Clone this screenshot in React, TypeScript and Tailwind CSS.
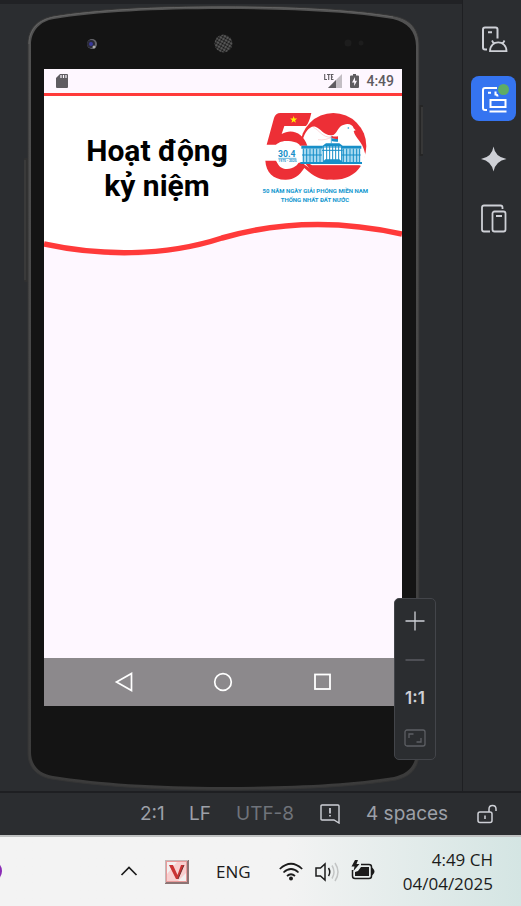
import type { ReactNode } from "react";

const logoFont = { fontFamily: "Roboto, 'Liberation Sans', sans-serif" };

function PhoneFrame() {
  return (
    <svg className="absolute inset-0 h-full w-full" viewBox="24 4 400 787" preserveAspectRatio="none" aria-hidden="true">
      <defs>
        <linearGradient id="edge" x1="0" y1="0" x2="0" y2="1">
          <stop offset="0" stopColor="#525252" />
          <stop offset="1" stopColor="#3b3b3b" />
        </linearGradient>
        <pattern id="mesh" width="3" height="3" patternUnits="userSpaceOnUse" patternTransform="rotate(30)">
          <rect width="3" height="3" fill="#6a6a6a" />
          <circle cx="1.5" cy="1.5" r="1.2" fill="#151515" />
        </pattern>
      </defs>
      <rect x="24" y="158" width="4" height="124" rx="1" fill="#303030" />
      <path d="M25 160V280" stroke="#454545" strokeWidth="1" />
      <rect x="419" y="105" width="4" height="51" rx="1" fill="#252525" />
      <path d="M422 107V154" stroke="#4b4b4b" strokeWidth="1" />
      <path
        d="M28 44C28 28 38 19 53 16C95 9 155 6 223 6C292 6 352 9 394 16C410 19 419 29 419 45V753C419 769 409 777 396 780C352 787 292 790 223 790C155 790 96 786 52 779C38 777 28 768 28 753Z"
        fill="url(#edge)"
        stroke="#353535"
        strokeWidth="1"
      />
      <path
        d="M31 45C31 31 40 21 54 19C96 12 156 9 223 9C291 9 351 12 393 19C407 22 416 31 416 46V752C416 766 407 774 394 777C351 784 291 787 223 787C156 787 97 783 53 776C40 774 31 766 31 752Z"
        fill="#141414"
      />
      <path
        d="M29 44C29 29 39 20 54 17C96 10 156 7 223 7C291 7 351 10 393 17"
        fill="none"
        stroke="#636363"
        strokeWidth="1"
      />
      <circle cx="92" cy="44" r="5" fill="#66666c" />
      <circle cx="91" cy="44" r="4" fill="#292936" />
      <circle cx="91" cy="44" r="2" fill="#39399a" />
      <circle cx="94" cy="47" r="1.5" fill="#aaa" />
      <circle cx="223.500" cy="43.500" r="9" fill="url(#mesh)" />
      <circle cx="348" cy="43" r="3.500" fill="#1d1d1d" />
      <circle cx="361" cy="43" r="2.500" fill="#1d1d1d" />
    </svg>
  );
}

function AnniversaryLogo() {
  return (
    <svg className="h-[110px] w-[130px] shrink-0" viewBox="0 0 390 330" role="img" aria-label="50 năm">
      <circle cx="250" cy="138" r="99" fill="#ed2f36" />
      <path
        d="M158 120C164 98 178 76 196 80C214 87 219 104 243 106C262 108 262 76 282 74C296 69 309 75 311 85L317 91L311 93C316 116 338 124 345 160C346 180 340 188 332 196H186L150 175V136Z"
        fill="#fff"
      />
      <path d="M190 82C210 92 216 112 244 112C232 118 220 121 204 119" fill="none" stroke="#f7c4c6" strokeWidth="2" />
      <circle cx="295" cy="84" r="2.500" fill="#1799d2" />
      <path
        d="M91 39H184Q177 70 168 78H103L95 102C124 84 160 98 172 137H150C146 128 129 123 109 123C92 123 84 130 78 134H50L72 54Q77 39 91 39Z"
        fill="#ed2f36"
      />
      <path
        d="M46 182H80C84 198 95 207 111 207C130 207 143 196 149 183C170 198 205 226 247 237C210 246 184 222 163 204C147 228 132 239 108 239C70 240 48 216 46 182Z"
        fill="#ed2f36"
      />
      <path d="m131 48 2.600 7.500h8l-6.300 5 2.400 7.800-6.700-4.700-6.700 4.700 2.400-7.800-6.300-5h8z" fill="#fff200" />
      <circle cx="112" cy="165" r="38" fill="#fff" />
      <path d="M140 138H170V188H140Z" fill="#fff" />
      <text x="84" y="170" fontSize="26" fontWeight="700" fill="#178fc8" style={logoFont}>30.4</text>
      <path d="M85 175H139" stroke="#178fc8" strokeWidth="2" />
      <text x="85" y="187" fontSize="10" fontWeight="700" fill="#178fc8" style={logoFont}>1975 - 2025</text>
      <path d="M154 137H218L228 130H268L278 137H334V146H154Z" fill="#178fc8" />
      <path d="M158 146H330V186H158Z" fill="#a8daf0" />
      <path
        d="M160 146V187M170 146V187M180 146V187M190 146V187M200 146V187M210 146V187M280 146V187M290 146V187M300 146V187M310 146V187M320 146V187M329 146V187M156 165H216M274 165H332"
        stroke="#178fc8"
        strokeWidth="3"
      />
      <path d="M218 139H274V187H218Z" fill="#fff" />
      <path d="M220 138V187M230 138V187M239 138V187M248 138V187M257 138V187M266 138V187M275 138V187M216 141H278M216 151H278" stroke="#178fc8" strokeWidth="3" />
      <path d="M151 186H218L226 178H268L278 186H336V192H151Z" fill="#178fc8" />
      <path d="M244 130V108" stroke="#178fc8" strokeWidth="2" />
      <path d="M245 107Q252 111 264 109V117Q253 118 245 115Z" fill="#ed2f36" />
      <path d="M245 115Q253 118 264 117V125Q253 126 245 123Z" fill="#178fc8" />
      <path d="M183 197H333C315 225 286 239 250 239C222 237 199 223 183 197Z" fill="#ed2f36" />
      <text x="196" y="279" textAnchor="middle" fontSize="18" fontWeight="700" fill="#1297cf" style={logoFont}>50 NĂM NGÀY GIẢI PHÓNG MIỀN NAM</text>
      <text x="195" y="306" textAnchor="middle" fontSize="18" fontWeight="700" fill="#1297cf" style={logoFont}>THỐNG NHẤT ĐẤT NƯỚC</text>
    </svg>
  );
}

function AndroidStatus() {
  return (
    <div className="flex h-6 items-center justify-between bg-[#fef7ff] pr-2 pl-3 text-[#5f5c61]">
      <svg className="h-[14px] w-3" viewBox="0 0 12 14" aria-label="SD card">
        <path d="M4 0H11Q12 0 12 1V13Q12 14 11 14H1Q0 14 0 13V4Z" fill="currentColor" />
        <path d="M5 1V4M7.500 1V4M10 1V4" stroke="#fef7ff" strokeWidth="1.200" />
      </svg>
      <div className="flex items-center">
        <svg className="h-4 w-[19px]" viewBox="0 0 19 16" aria-label="LTE signal">
          <path d="M4 15 18 1V15Z" fill="#c3bec4" />
          <path d="M4 15 12 7V15Z" fill="currentColor" />
          <path d="M.7 1V6.500H3M3 1.500H6.500M4.700 1V7M9.500 1.500H7.500V6.500H9.500M7.500 4H9" fill="none" stroke="currentColor" strokeWidth="1.100" />
        </svg>
        <svg className="ml-[7px] h-[14px] w-[9px]" viewBox="0 0 9 14" aria-label="Battery charging">
          <path d="M3 0H6V1.500H8Q9 1.500 9 2.500V13Q9 14 8 14H1Q0 14 0 13V2.500Q0 1.500 1 1.500H3Z" fill="currentColor" />
          <path d="M5 3 2 8.500H4.200V12L7 6.800H5Z" fill="#fef7ff" />
        </svg>
        <span className="ml-[7px] text-[14px] leading-6 font-medium">4:49</span>
      </div>
    </div>
  );
}

function Phone() {
  return (
    <div className="relative ml-6 w-[400px] shrink-0 pt-[65px] pr-[22px] pb-[85px] pl-5">
      <PhoneFrame />
      <div className="relative flex h-full flex-col bg-[#fef7ff] font-['Roboto','Liberation_Sans',sans-serif]">
        <AndroidStatus />
        <header className="border-t-3 border-[#ff3a3a]">
          <div className="flex h-[122px] bg-white pr-[22px] pl-5">
            <h1 className="min-w-0 flex-1 pt-[37px] text-center text-[30px] leading-[35px] font-bold text-black">
              Hoạt động
              <br />
              kỷ niệm
            </h1>
            <div className="w-[130px] pt-1">
              <AnniversaryLogo />
            </div>
          </div>
          <svg className="block h-10 w-full" viewBox="0 0 358 40" preserveAspectRatio="none" aria-hidden="true">
            <path d="M0 0H358V16C300 3 240 2 178 20C120 39 55 38 0 26Z" fill="#fff" />
            <path d="M0 26C55 38 120 39 178 20C240 2 300 3 358 16" fill="none" stroke="#ff3a3a" strokeWidth="5.500" />
          </svg>
        </header>
        <main className="flex-1" />
        <nav className="flex h-12 items-center justify-center gap-[75px] bg-[#8c898c] text-white">
          <button className="h-6 w-6" aria-label="Back">
            <svg viewBox="0 0 24 24"><path d="M19.500 3.500V20.500L4.500 12Z" fill="none" stroke="currentColor" strokeWidth="1.700" /></svg>
          </button>
          <button className="h-6 w-6" aria-label="Home">
            <svg viewBox="0 0 24 24"><circle cx="12" cy="12" r="8.300" fill="none" stroke="currentColor" strokeWidth="1.700" /></svg>
          </button>
          <button className="h-6 w-6" aria-label="Overview">
            <svg viewBox="0 0 24 24"><rect x="5" y="4.500" width="15" height="14.500" fill="none" stroke="currentColor" strokeWidth="1.800" /></svg>
          </button>
        </nav>
      </div>
    </div>
  );
}

function ZoomControls() {
  return (
    <div className="absolute top-[598px] left-[394px] flex h-[162px] w-[42px] flex-col items-center rounded-[5px] border border-[#43454a] bg-[#2b2d30] text-[#ced0d6]">
      <button className="flex h-[43px] w-full items-center justify-center" aria-label="Zoom in">
        <svg className="h-5 w-5" viewBox="0 0 20 20"><path d="M10 .5V19.500M.5 10H19.500" stroke="currentColor" strokeWidth="1.300" /></svg>
      </button>
      <button className="flex h-[35px] w-full items-center justify-center" aria-label="Zoom out">
        <svg className="h-5 w-5" viewBox="0 0 20 20"><path d="M.5 10H19.500" stroke="#626469" strokeWidth="1.300" /></svg>
      </button>
      <button className="h-[43px] w-full font-['Inter',sans-serif] text-[17px] font-semibold">1:1</button>
      <button className="flex h-[35px] w-full items-center justify-center" aria-label="Fit to screen">
        <svg className="h-[18px] w-[22px]" viewBox="0 0 22 18" fill="none" stroke="#5d5f64" strokeWidth="1.300">
          <rect x="1" y="1" width="20" height="16" rx="2" />
          <path d="M5 9V5H9.500M12.500 13H17V9" />
        </svg>
      </button>
    </div>
  );
}

function ToolButton({ label, active, children }: { label: string; active?: boolean; children: ReactNode }) {
  return (
    <button
      aria-label={label}
      className={
        active
          ? "flex h-[45px] w-[45px] items-center justify-center rounded-lg bg-[#3574f0] text-white"
          : "flex h-[45px] w-[45px] items-center justify-center rounded-lg text-[#ced0d6]"
      }
    >
      <svg className="h-[30px] w-[30px]" viewBox="0 0 30 30" fill="none" stroke="currentColor" strokeWidth="2">
        {children}
      </svg>
    </button>
  );
}

function ToolStrip() {
  return (
    <aside className="flex w-[59px] shrink-0 flex-col items-center gap-[15px] border-l border-[#1e1f22] pt-4 pl-[3px]">
      <ToolButton label="Device manager">
        <path d="M8 25.500H6Q4 25.500 4 23.500V5.500Q4 3.500 6 3.500H16.500Q18.500 3.500 18.500 5.500V14.500M9 8.300H13" />
        <path d="M11 27.200C11 15.500 27.500 15.500 27.500 27.200ZM15 20 13 16.500M23.500 20 25.500 16.500" strokeWidth="1.800" />
      </ToolButton>
      <ToolButton label="Running devices" active>
        <path d="M8 26H6Q4 26 4 24V6Q4 4 6 4H18M9 8.800H12M16.500 7.500V10.500Q18.500 10.500 18.500 12.500" />
        <rect x="11.500" y="16" width="15" height="7" />
        <path d="M10.500 27.500H27.500" />
        <circle cx="24.500" cy="5.500" r="5.500" fill="#5fad65" stroke="none" />
      </ToolButton>
      <ToolButton label="Gemini">
        <path d="M14.500 2.500Q16 13 27.500 15Q16.500 17 14.500 27.500Q12.500 17 2 15Q13 13 14.500 2.500Z" fill="currentColor" stroke="none" />
      </ToolButton>
      <ToolButton label="Device explorer">
        <path d="M11 27.500H5Q3 27.500 3 25.500V3.500Q3 1.500 5 1.500H21.500Q23.500 1.500 23.500 3.500V5" strokeWidth="1.800" />
        <rect x="13.500" y="7.500" width="13" height="20" rx="2" strokeWidth="1.800" />
        <path d="M17 12H23" />
      </ToolButton>
    </aside>
  );
}

function StatusBar() {
  return (
    <footer className="flex h-11 items-center border-t-2 border-[#1e1f22] bg-[#2b2d30] pr-6 pl-[140px] font-['Inter',sans-serif] text-[19px] text-[#9da0a8]">
      <button className="w-[49px] text-left">2:1</button>
      <button className="w-[47px] text-left">LF</button>
      <button className="w-[84px] text-left text-[#6f737a]">UTF-8</button>
      <button className="flex w-[46px] items-center" aria-label="Notifications">
        <svg className="h-5 w-5" viewBox="0 0 20 20" fill="none" stroke="#ced0d6" strokeWidth="1.400">
          <path d="M2 1H18Q19 1 19 2V19L14 16H2Q1 16 1 15V2Q1 1 2 1Z" />
          <path d="M10 4V9.500M10 11V12.500" strokeWidth="1.700" />
        </svg>
      </button>
      <button className="text-left whitespace-nowrap">4 spaces</button>
      <button className="ml-auto" aria-label="File is writable">
        <svg className="h-5 w-5" viewBox="0 0 20 20" fill="none" stroke="#ced0d6" strokeWidth="1.500">
          <rect x="1" y="8" width="14" height="10.500" rx="2" />
          <path d="M12 8V5Q12 1.500 15.500 1.500Q19 1.500 19 5V7M8 11.500V15" />
        </svg>
      </button>
    </footer>
  );
}

function Taskbar() {
  return (
    <div className="relative flex h-[71px] items-center overflow-hidden border-t-2 border-[#bfc1c1] bg-linear-to-r from-[#f3f3f3] from-55% to-[#d4e5e3] pr-7 pl-[120px] font-['Open_Sans','Noto_Sans',sans-serif] text-[17px] text-[#1b1b1b]">
      <span className="absolute top-[23px] -left-[20px] h-[22px] w-[22px] rounded-full bg-[#8a2bb5]" />
      <button className="w-[45px]" aria-label="Show hidden icons">
        <svg className="h-[18px] w-[18px]" viewBox="0 0 18 18"><path d="M1.500 12 9 4.500 16.500 12" fill="none" stroke="currentColor" strokeWidth="1.700" /></svg>
      </button>
      <button className="w-[51px]" aria-label="Vietnamese input">
        <svg className="h-6 w-6" viewBox="0 0 24 24">
          <rect width="24" height="24" fill="#8c7474" />
          <path d="M0 0H23V1H1V23H0Z" fill="#c3b9b9" />
          <rect x="1" y="1" width="21" height="21" fill="#e99a9a" />
          <rect x="2" y="2" width="19" height="19" fill="#f8cfcf" />
          <path d="M2 2H12L2 14ZM21 13V21H13Z" fill="#f3f0f0" />
          <path d="M4 5H8L12.500 15 16 5H19L13 19H11Z" fill="#c93232" />
          <path d="M13 19 19 5" stroke="#703030" />
        </svg>
      </button>
      <button className="w-[63px] text-left">ENG</button>
      <button className="flex items-center" aria-label="Network, volume and battery">
        <svg className="h-6 w-6" viewBox="0 0 24 24" fill="none" stroke="currentColor" strokeWidth="1.700">
          <path d="M.8 9Q12-1.500 23.200 9M4.500 12.500Q12 5.500 19.500 12.500M8 16Q12 12.500 16 16" />
          <circle cx="12" cy="18.500" r="2" fill="currentColor" stroke="none" />
        </svg>
        <svg className="ml-3 h-6 w-6" viewBox="0 0 24 24" fill="none" stroke="currentColor" strokeWidth="1.500">
          <path d="M10 4V20L5.500 16H1V8H5.500ZM13.500 8Q16 12 13.500 16" />
          <path d="M17 5.500Q21 12 17 18.500M20 3Q26 12 20 21" stroke="#c3c5c5" />
        </svg>
        <svg className="ml-3 h-6 w-6" viewBox="0 0 24 24" fill="none" stroke="currentColor" strokeWidth="1.500">
          <path d="M10 4.500H18Q20.500 4.500 20.500 7V16Q20.500 18.500 18 18.500H4Q1.500 18.500 1.500 16V10" />
          <path d="M10 7H18V16H4V12L7 11Z" fill="currentColor" stroke="none" />
          <path d="M21.500 9Q24 11.500 21.500 14Z" fill="currentColor" />
          <path d="M4 0 .5 6.500H3.500L2.500 11 8.500 4H5.500L7 0Z" fill="currentColor" stroke="none" />
        </svg>
      </button>
      <button className="ml-auto text-right leading-6">
        4:49 CH
        <br />
        04/04/2025
      </button>
    </div>
  );
}

export default function App() {
  return (
    <div className="flex min-h-screen flex-col overflow-hidden bg-[#2b2d30]">
      <div className="flex h-[791px]">
        <section className="relative flex min-w-0 flex-1 border-t-4 border-[#212225]">
          <Phone />
        </section>
        <ToolStrip />
      </div>
      <StatusBar />
      <Taskbar />
      <ZoomControls />
    </div>
  );
}
